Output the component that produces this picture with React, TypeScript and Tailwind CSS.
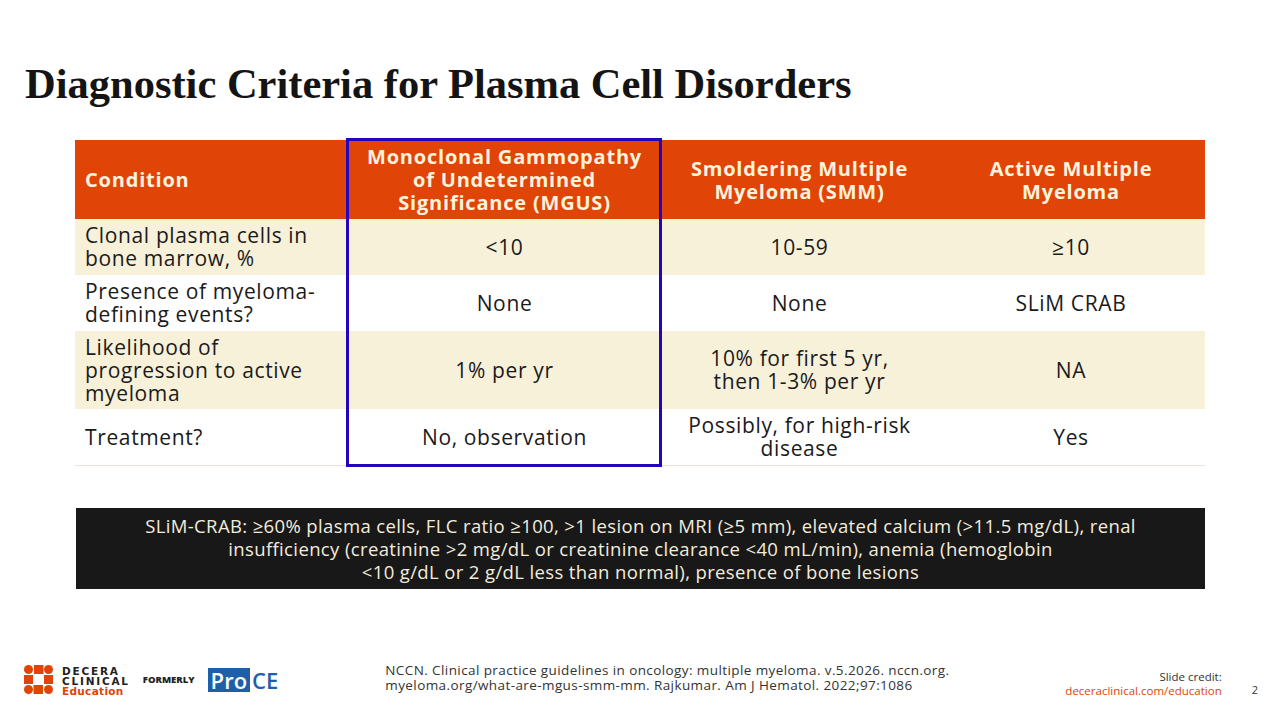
import { Fragment } from "react";

const rows = [
  {
    label: ["Clonal plasma cells in", "bone marrow, %"],
    mgus: ["<10"],
    smm: ["10-59"],
    active: ["≥10"],
    h: "h-[56px]",
    bg: "bg-[#f8f1da]",
  },
  {
    label: ["Presence of myeloma-", "defining events?"],
    mgus: ["None"],
    smm: ["None"],
    active: ["SLiM CRAB"],
    h: "h-[56px]",
    bg: "bg-white",
  },
  {
    label: ["Likelihood of", "progression to active", "myeloma"],
    mgus: ["1% per yr"],
    smm: ["10% for first 5 yr,", "then 1-3% per yr"],
    active: ["NA"],
    h: "h-[78px]",
    bg: "bg-[#f8f1da]",
  },
  {
    label: ["Treatment?"],
    mgus: ["No, observation"],
    smm: ["Possibly, for high-risk", "disease"],
    active: ["Yes"],
    h: "h-[56px]",
    bg: "bg-white",
  },
];

function Lines({ lines }: { lines: string[] }) {
  return (
    <span>
      {lines.map((l, i) => (
        <Fragment key={i}>
          {i > 0 && <br />}
          {l}
        </Fragment>
      ))}
    </span>
  );
}

function DeceraMark() {
  return (
    <svg width="29" height="29" viewBox="0 0 29 29" className="shrink-0">
      <g fill="#e04406">
        <circle cx="4.5" cy="4.5" r="4.5" />
        <circle cx="24.5" cy="4.5" r="4.5" />
        <circle cx="4.5" cy="24.5" r="4.5" />
        <circle cx="24.5" cy="24.5" r="4.5" />
        <rect x="10" y="0" width="9.5" height="9" />
        <rect x="0" y="10" width="9" height="9" />
        <rect x="20" y="10" width="9" height="9" />
        <rect x="9.5" y="20" width="9.5" height="9" />
      </g>
    </svg>
  );
}

export default function App() {
  return (
    <main className="relative flex h-[720px] w-[1280px] flex-col overflow-hidden bg-white font-['Open_Sans',sans-serif] text-[#1a1a1a]">
      <h1 className="pl-[25px] pt-[59px] font-['Liberation_Serif',serif] text-[42.5px] font-bold leading-[50px] text-[#141414]">
        Diagnostic Criteria for Plasma Cell Disorders
      </h1>

      <div className="relative ml-[75px] mt-[31px] w-[1130px]">
        <div className="grid h-[79px] grid-cols-[272px_315px_275px_268px] bg-[#e04406] text-[20px] font-bold leading-[23px] tracking-[0.04em] text-[#fff3dc]">
          <div className="flex items-center pl-[10px]">Condition</div>
          <div className="flex items-center justify-center whitespace-nowrap text-center">
            <Lines lines={["Monoclonal Gammopathy", "of Undetermined", "Significance (MGUS)"]} />
          </div>
          <div className="flex items-center justify-center whitespace-nowrap text-center">
            <Lines lines={["Smoldering Multiple", "Myeloma (SMM)"]} />
          </div>
          <div className="flex items-center justify-center whitespace-nowrap text-center">
            <Lines lines={["Active Multiple", "Myeloma"]} />
          </div>
        </div>

        {rows.map((r) => (
          <div
            key={r.label[0]}
            className={`grid grid-cols-[272px_315px_275px_268px] whitespace-nowrap text-[21px] leading-[23px] tracking-[0.03em] ${r.h} ${r.bg}`}
          >
            <div className="flex items-center pl-[10px]">
              <Lines lines={r.label} />
            </div>
            <div className="flex items-center justify-center text-center">
              <Lines lines={r.mgus} />
            </div>
            <div className="flex items-center justify-center text-center">
              <Lines lines={r.smm} />
            </div>
            <div className="flex items-center justify-center text-center">
              <Lines lines={r.active} />
            </div>
          </div>
        ))}
        <div className="h-px bg-[#e9e4d2]" />

        <div className="absolute left-[271px] top-[-2px] h-[329px] w-[316px] border-[3px] border-[#2305bd]" />
      </div>

      <div className="ml-[76px] mt-[42px] flex h-[81px] w-[1129px] items-center justify-center whitespace-nowrap bg-[#181818] text-center text-[18.5px] leading-[23px] tracking-[0.02em] text-[#f3ecdc]">
        <Lines
          lines={[
            "SLiM-CRAB: ≥60% plasma cells, FLC ratio ≥100, >1 lesion on MRI (≥5 mm), elevated calcium (>11.5 mg/dL), renal",
            "insufficiency (creatinine >2 mg/dL or creatinine clearance <40 mL/min), anemia (hemoglobin",
            "<10 g/dL or 2 g/dL less than normal), presence of bone lesions",
          ]}
        />
      </div>

      <footer className="mt-auto mb-[22px] flex items-start pl-[24px] pr-[22px]">
        <DeceraMark />
        <div className="ml-[9px] mt-[1px] flex flex-col font-['DejaVu_Sans',sans-serif] text-[10.5px] font-bold leading-[10px] tracking-[0.17em] text-[#222]">
          <span>DECERA</span>
          <span>CLINICAL</span>
          <span className="tracking-[0.03em] text-[#e04406]">Education</span>
        </div>
        <span className="ml-[13px] mt-[8px] font-['Open_Sans',sans-serif] text-[9.5px] font-extrabold leading-[13px] text-[#222]">
          FORMERLY
        </span>
        <div className="ml-[13px] mt-[3px] flex items-center text-[22px] font-semibold leading-none">
          <span className="flex h-[24px] items-center bg-[#1f5ea8] px-[3px] text-white">Pro</span>
          <span className="ml-[2px] text-[#1f5ea8]">CE</span>
        </div>

        <div className="ml-[107px] mt-[-2px] whitespace-nowrap text-[13.5px] leading-[15px] tracking-[0.03em] text-[#333]">
          NCCN. Clinical practice guidelines in oncology: multiple myeloma. v.5.2026. nccn.org.
          <br />
          myeloma.org/what-are-mgus-smm-mm. Rajkumar. Am J Hematol. 2022;97:1086
        </div>

        <div className="ml-auto mt-[5px] flex flex-col items-end text-[11.5px] leading-[14px]">
          <span className="text-[#333]">Slide credit:</span>
          <span className="text-[#e04406]">deceraclinical.com/education</span>
        </div>
        <span className="ml-[30px] mt-[18px] text-[11px] leading-[14px] text-[#333]">2</span>
      </footer>
    </main>
  );
}
